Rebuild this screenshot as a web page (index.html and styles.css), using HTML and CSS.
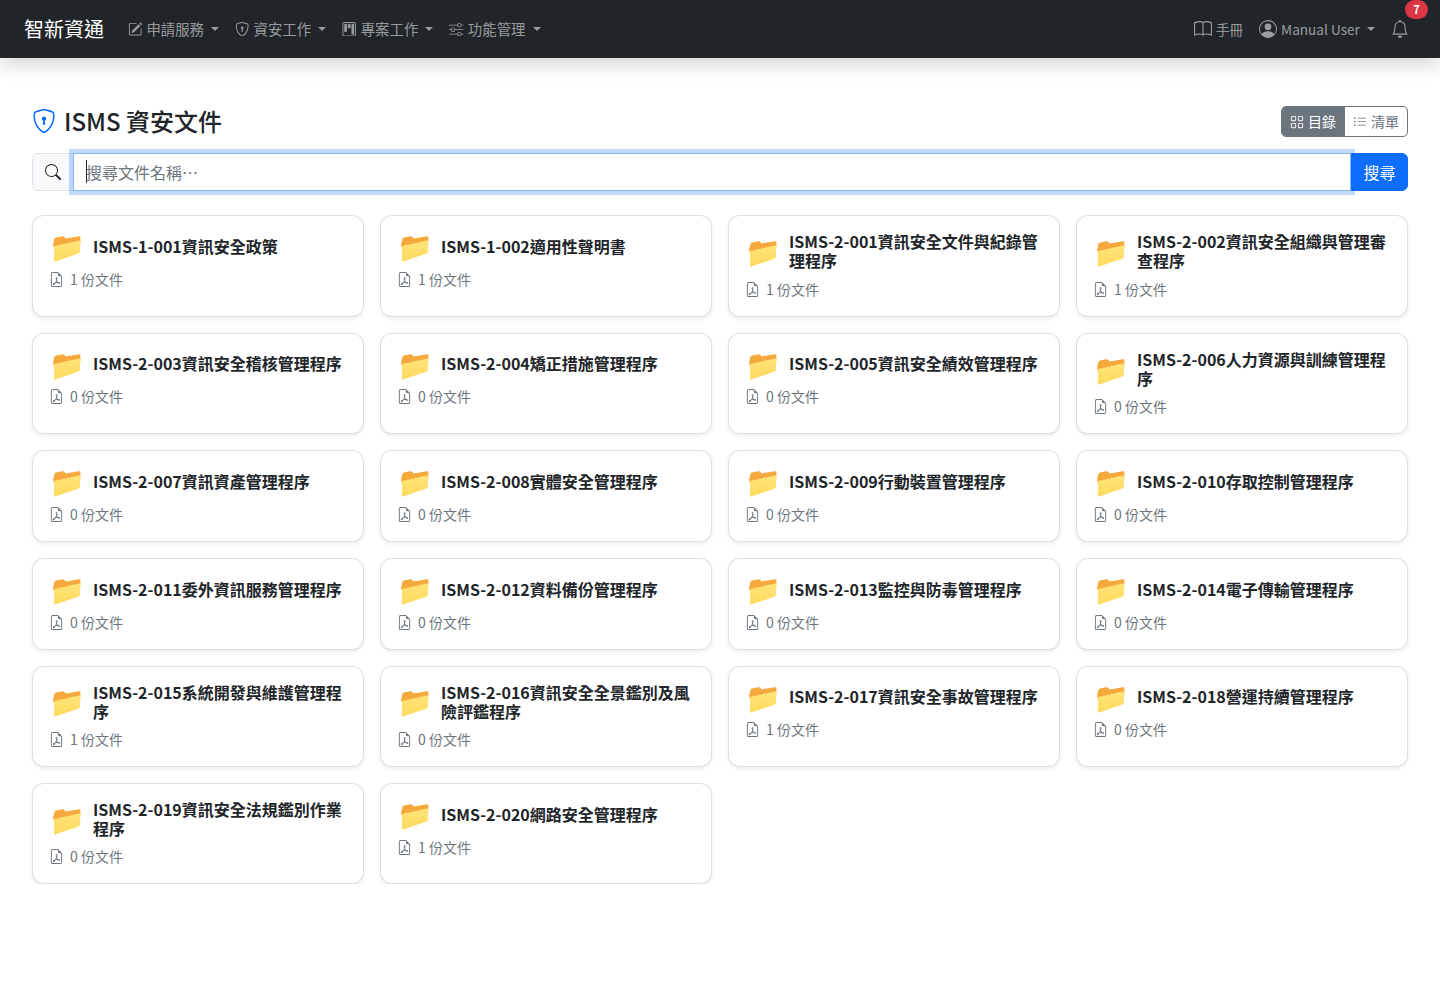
FILE: index.html
```html
<!DOCTYPE html>
<html lang="zh-Hant">
<head>
<meta charset="utf-8">
<title>ISMS 資安文件</title>
<link rel="stylesheet" href="styles.css">
</head>
<body>
<svg class="defs" width="0" height="0" aria-hidden="true">
  <defs>
    <linearGradient id="folder-front" x1="0" y1="0" x2="0" y2="1">
      <stop offset="0" stop-color="#ffe47a"/>
      <stop offset="1" stop-color="#ffd95c"/>
    </linearGradient>
  </defs>
  <symbol id="i-pdf" viewBox="0 0 16 16"><path d="M14 14V4.500L9.500 0H4a2 2 0 0 0-2 2v12a2 2 0 0 0 2 2h8a2 2 0 0 0 2-2M9.500 3A1.500 1.500 0 0 0 11 4.500h2V14a1 1 0 0 1-1 1H4a1 1 0 0 1-1-1V2a1 1 0 0 1 1-1h5.500z"/><path d="M4.603 14.087a.8.8 0 0 1-.438-.42c-.195-.388-.13-.776.08-1.102.198-.307.526-.568.897-.787a7.7 7.7 0 0 1 1.482-.645 20 20 0 0 0 1.062-2.227 7.3 7.3 0 0 1-.43-1.295c-.086-.4-.119-.796-.046-1.136.075-.354.274-.672.65-.823.192-.077.4-.12.602-.077a.7.7 0 0 1 .477.365c.088.164.12.356.127.538.007.188-.012.396-.047.614-.084.51-.27 1.134-.52 1.794a11 11 0 0 0 .98 1.686 5.8 5.8 0 0 1 1.334.05c.364.066.734.195.96.465.12.144.193.32.2.518.007.192-.047.382-.138.563a1.04 1.04 0 0 1-.354.416.86.86 0 0 1-.51.138c-.331-.014-.654-.196-.933-.417a5.7 5.7 0 0 1-.911-.95 11.7 11.7 0 0 0-1.997.406 11.3 11.3 0 0 1-1.02 1.51c-.292.35-.609.656-.927.787a.8.8 0 0 1-.58.029m1.379-1.901q-.25.115-.459.238c-.328.194-.541.383-.647.547-.094.145-.096.25-.04.361q.016.032.026.044l.035-.012c.137-.056.355-.235.635-.572a8 8 0 0 0 .45-.606m1.64-1.33a13 13 0 0 1 1.01-.193 12 12 0 0 1-.51-.858 21 21 0 0 1-.5 1.05zm2.446.45q.226.245.435.41c.24.19.407.253.498.256a.1.1 0 0 0 .07-.015.3.3 0 0 0 .094-.125.44.44 0 0 0 .059-.2.1.1 0 0 0-.026-.063c-.052-.062-.2-.152-.518-.209a4 4 0 0 0-.612-.053zM8.078 7.8a7 7 0 0 0 .2-.828q.046-.282.038-.465a.6.6 0 0 0-.032-.198.5.5 0 0 0-.145.04c-.087.035-.158.106-.196.283-.04.192-.03.469.046.822q.036.167.09.346z"/></symbol>
  <symbol id="i-folder" viewBox="0 0 28 26.500"><path fill="#f5a93c" d="M0 9.500 1.600 3.200Q1.900 2.200 3 2L9.500.8Q10.600.6 11.300 1.400L12.600 3 26 .9Q27.400.7 27.400 2V7L1 13z"/><path fill="url(#folder-front)" d="M1 10.600 26.300 5Q27.600 4.700 27.500 6L26.800 16.700Q26.700 17.800 25.700 18.100L2.200 26.200Q1 26.600 1 25.400z"/></symbol>
</svg>

<nav class="navbar">
  <a class="brand">智新資通</a>
  <ul class="nav-list">
    <li class="nav-link caret"><svg class="ni" viewBox="0 0 16 16"><path d="M15.502 1.94a.5.5 0 0 1 0 .706L14.459 3.69l-2-2L13.502.646a.5.5 0 0 1 .707 0l1.293 1.293zm-1.750 2.456-2-2L4.939 9.210a.5.500 0 0 0-.121.196l-.805 2.414a.25.25 0 0 0 .316.316l2.414-.805a.5.500 0 0 0 .196-.120l6.813-6.814z"/><path fill-rule="evenodd" d="M1 13.500A1.500 1.500 0 0 0 2.500 15h11a1.500 1.500 0 0 0 1.500-1.500v-6a.5.500 0 0 0-1 0v6a.5.500 0 0 1-.5.500h-11a.5.500 0 0 1-.5-.500v-11a.5.500 0 0 1 .5-.500H9a.5.500 0 0 0 0-1H2.500A1.500 1.500 0 0 0 1 2.500z"/></svg>申請服務</li>
    <li class="nav-link caret"><svg class="ni" viewBox="0 0 16 16"><path d="M5.338 1.590a61 61 0 0 0-2.837.856.480.480 0 0 0-.328.390c-.554 4.157.726 7.190 2.253 9.188a10.700 10.700 0 0 0 2.287 2.233c.346.244.652.420.893.533q.180.085.293.118a1 1 0 0 0 .101.025 1 1 0 0 0 .1-.025q.114-.034.294-.118c.240-.113.547-.290.893-.533a10.700 10.700 0 0 0 2.287-2.233c1.527-1.997 2.807-5.031 2.253-9.188a.480.480 0 0 0-.328-.390c-.651-.213-1.750-.560-2.837-.855C9.552 1.290 8.531 1.067 8 1.067c-.530 0-1.552.223-2.662.524zM5.072.560C6.157.265 7.310 0 8 0s1.843.265 2.928.560c1.110.300 2.229.655 2.887.870a1.540 1.540 0 0 1 1.044 1.262c.596 4.477-.787 7.795-2.465 9.990a11.800 11.800 0 0 1-2.517 2.453 7 7 0 0 1-1.048.625c-.280.132-.581.240-.829.240s-.548-.108-.829-.240a7 7 0 0 1-1.048-.625 11.800 11.800 0 0 1-2.517-2.453C1.928 10.487.545 7.169 1.141 2.692A1.540 1.540 0 0 1 2.185 1.430 63 63 0 0 1 5.072.560"/><path d="M9.500 6.500a1.500 1.500 0 0 1-1 1.415l.385 1.990a.500.500 0 0 1-.491.595h-.788a.500.500 0 0 1-.490-.595l.384-1.990a1.500 1.500 0 1 1 2-1.415"/></svg>資安工作</li>
    <li class="nav-link caret"><svg class="ni" viewBox="0 0 16 16"><path d="M13.500 1a1 1 0 0 1 1 1v12a1 1 0 0 1-1 1h-11a1 1 0 0 1-1-1V2a1 1 0 0 1 1-1zm-11-1a2 2 0 0 0-2 2v12a2 2 0 0 0 2 2h11a2 2 0 0 0 2-2V2a2 2 0 0 0-2-2z"/><path d="M6.500 3a1 1 0 0 1 1-1h1a1 1 0 0 1 1 1v3a1 1 0 0 1-1 1h-1a1 1 0 0 1-1-1zm-4 0a1 1 0 0 1 1-1h1a1 1 0 0 1 1 1v7a1 1 0 0 1-1 1h-1a1 1 0 0 1-1-1zm8 0a1 1 0 0 1 1-1h1a1 1 0 0 1 1 1v10a1 1 0 0 1-1 1h-1a1 1 0 0 1-1-1z"/></svg>專案工作</li>
    <li class="nav-link caret"><svg class="ni" viewBox="0 0 16 16"><path fill-rule="evenodd" d="M11.500 2a1.500 1.500 0 1 0 0 3 1.500 1.500 0 0 0 0-3M9.050 3a2.500 2.500 0 0 1 4.900 0H16v1h-2.050a2.500 2.500 0 0 1-4.900 0H0V3zM4.500 7a1.500 1.500 0 1 0 0 3 1.500 1.500 0 0 0 0-3M2.050 8a2.500 2.500 0 0 1 4.900 0H16v1H6.950a2.500 2.500 0 0 1-4.900 0H0V8zm9.450 4a1.500 1.500 0 1 0 0 3 1.500 1.500 0 0 0 0-3m-2.450 1a2.500 2.500 0 0 1 4.900 0H16v1h-2.050a2.500 2.500 0 0 1-4.900 0H0v-1z"/></svg>功能管理</li>
  </ul>
  <ul class="nav-list nav-right">
    <li class="nav-link"><svg class="ni ni-lg" viewBox="0 0 16 16"><path d="M1 2.828c.885-.370 2.154-.769 3.388-.893 1.330-.134 2.458.063 3.112.752v9.746c-.935-.530-2.120-.603-3.213-.493-1.180.120-2.370.461-3.287.811zm7.500-.141c.654-.689 1.782-.886 3.112-.752 1.234.124 2.503.523 3.388.893v9.923c-.918-.350-2.107-.692-3.287-.810-1.094-.111-2.278-.039-3.213.492zM8 1.783C7.015.936 5.587.810 4.287.940c-1.514.153-3.042.672-3.994 1.105A.500.500 0 0 0 0 2.500v11a.500.500 0 0 0 .707.455c.882-.400 2.303-.881 3.680-1.020 1.409-.142 2.590.087 3.223.877a.500.500 0 0 0 .780 0c.633-.790 1.814-1.019 3.222-.877 1.378.139 2.800.620 3.681 1.020A.500.500 0 0 0 16 13.500v-11a.500.500 0 0 0-.293-.455c-.952-.433-2.480-.952-3.994-1.105C10.413.809 8.985.936 8 1.783"/></svg>手冊</li>
    <li class="nav-link caret user"><svg class="ni ni-lg" viewBox="0 0 16 16"><path d="M11 6a3 3 0 1 1-6 0 3 3 0 0 1 6 0"/><path fill-rule="evenodd" d="M0 8a8 8 0 1 1 16 0A8 8 0 0 1 0 8m8-7a7 7 0 0 0-5.468 11.370C3.242 11.226 4.805 10 8 10s4.757 1.225 5.468 2.370A7 7 0 0 0 8 1"/></svg>Manual User</li>
    <li class="nav-link bell"><svg class="ni ni-lg" viewBox="0 0 16 16"><path d="M8 16a2 2 0 0 0 2-2H6a2 2 0 0 0 2 2M8 1.918l-.797.161A4 4 0 0 0 4 6c0 .628-.134 2.197-.459 3.742-.160.767-.376 1.566-.663 2.258h10.244c-.287-.692-.502-1.490-.663-2.258C12.134 8.197 12 6.628 12 6a4 4 0 0 0-3.203-3.920zM14.220 12c.223.447.481.801.780 1H1c.299-.199.557-.553.780-1C2.680 10.200 3 6.880 3 6c0-2.420 1.720-4.440 4.005-4.901a1 1 0 1 1 1.990 0A5 5 0 0 1 13 6c0 .880.320 4.200 1.220 6"/></svg><span class="badge">7</span></li>
  </ul>
</nav>

<main class="page">
  <header class="page-head">
    <h1 class="page-title"><svg class="title-icon" viewBox="0 0 16 16"><path d="M5.338 1.590a61 61 0 0 0-2.837.856.480.480 0 0 0-.328.390c-.554 4.157.726 7.190 2.253 9.188a10.700 10.700 0 0 0 2.287 2.233c.346.244.652.420.893.533q.180.085.293.118a1 1 0 0 0 .101.025 1 1 0 0 0 .1-.025q.114-.034.294-.118c.240-.113.547-.290.893-.533a10.700 10.700 0 0 0 2.287-2.233c1.527-1.997 2.807-5.031 2.253-9.188a.480.480 0 0 0-.328-.390c-.651-.213-1.750-.560-2.837-.855C9.552 1.290 8.531 1.067 8 1.067c-.530 0-1.552.223-2.662.524zM5.072.560C6.157.265 7.310 0 8 0s1.843.265 2.928.560c1.110.300 2.229.655 2.887.870a1.540 1.540 0 0 1 1.044 1.262c.596 4.477-.787 7.795-2.465 9.990a11.800 11.800 0 0 1-2.517 2.453 7 7 0 0 1-1.048.625c-.280.132-.581.240-.829.240s-.548-.108-.829-.240a7 7 0 0 1-1.048-.625 11.800 11.800 0 0 1-2.517-2.453C1.928 10.487.545 7.169 1.141 2.692A1.540 1.540 0 0 1 2.185 1.430 63 63 0 0 1 5.072.560"/><path d="M9.500 6.500a1.500 1.500 0 0 1-1 1.415l.385 1.990a.500.500 0 0 1-.491.595h-.788a.500.500 0 0 1-.490-.595l.384-1.990a1.500 1.500 0 1 1 2-1.415"/></svg>ISMS 資安文件</h1>
    <div class="view-toggle">
      <span class="tog tog-on"><svg class="ti" viewBox="0 0 16 16"><path d="M1 2.500A1.500 1.500 0 0 1 2.500 1h3A1.500 1.500 0 0 1 7 2.500v3A1.500 1.500 0 0 1 5.500 7h-3A1.500 1.500 0 0 1 1 5.500zM2.500 2a.5.500 0 0 0-.5.500v3a.5.500 0 0 0 .5.500h3a.5.500 0 0 0 .5-.500v-3a.5.500 0 0 0-.5-.500zm6.500.500A1.500 1.500 0 0 1 10.500 1h3A1.500 1.500 0 0 1 15 2.500v3A1.500 1.500 0 0 1 13.500 7h-3A1.500 1.500 0 0 1 9 5.500zm1.500-.500a.5.500 0 0 0-.5.500v3a.5.500 0 0 0 .5.500h3a.5.500 0 0 0 .5-.500v-3a.5.500 0 0 0-.5-.500zM1 10.500A1.500 1.500 0 0 1 2.500 9h3A1.500 1.500 0 0 1 7 10.500v3A1.500 1.500 0 0 1 5.500 15h-3A1.500 1.500 0 0 1 1 13.500zm1.500-.500a.5.500 0 0 0-.5.500v3a.5.500 0 0 0 .5.500h3a.5.500 0 0 0 .5-.500v-3a.5.500 0 0 0-.5-.500zm6.500.500A1.500 1.500 0 0 1 10.500 9h3a1.500 1.500 0 0 1 1.500 1.500v3a1.500 1.500 0 0 1-1.500 1.500h-3A1.500 1.500 0 0 1 9 13.500zm1.500-.500a.5.500 0 0 0-.5.500v3a.5.500 0 0 0 .5.500h3a.5.500 0 0 0 .5-.500v-3a.5.500 0 0 0-.5-.500z"/></svg>目錄</span>
      <span class="tog"><svg class="ti" viewBox="0 0 16 16"><path fill-rule="evenodd" d="M5 11.500a.5.500 0 0 1 .5-.500h9a.5.500 0 0 1 0 1h-9a.5.500 0 0 1-.5-.500m0-4a.5.500 0 0 1 .5-.500h9a.5.500 0 0 1 0 1h-9a.5.500 0 0 1-.5-.500m0-4a.5.500 0 0 1 .5-.500h9a.5.500 0 0 1 0 1h-9a.5.500 0 0 1-.5-.500m-3 1a1 1 0 1 0 0-2 1 1 0 0 0 0 2m0 4a1 1 0 1 0 0-2 1 1 0 0 0 0 2m0 4a1 1 0 1 0 0-2 1 1 0 0 0 0 2"/></svg>清單</span>
    </div>
  </header>

  <form class="search">
    <span class="search-addon"><svg class="si" viewBox="0 0 16 16"><path d="M11.742 10.344a6.500 6.500 0 1 0-1.397 1.398h-.001q.044.060.098.115l3.850 3.850a1 1 0 0 0 1.415-1.414l-3.850-3.850a1 1 0 0 0-.115-.100zM12 6.500a5.500 5.500 0 1 1-11 0 5.500 5.500 0 0 1 11 0"/></svg></span>
    <span class="search-field"><input class="search-input" type="text" placeholder="搜尋文件名稱…" autofocus></span>
    <button class="search-btn" type="button">搜尋</button>
  </form>

  <section class="grid">
    <article class="card"><div class="card-head"><svg class="folder"><use href="#i-folder"/></svg><h2 class="card-title">ISMS-1-001資訊安全政策</h2></div><p class="card-meta"><svg class="pdf"><use href="#i-pdf"/></svg>1 份文件</p></article>
    <article class="card"><div class="card-head"><svg class="folder"><use href="#i-folder"/></svg><h2 class="card-title">ISMS-1-002適用性聲明書</h2></div><p class="card-meta"><svg class="pdf"><use href="#i-pdf"/></svg>1 份文件</p></article>
    <article class="card"><div class="card-head"><svg class="folder"><use href="#i-folder"/></svg><h2 class="card-title">ISMS-2-001資訊安全文件與紀錄管理程序</h2></div><p class="card-meta"><svg class="pdf"><use href="#i-pdf"/></svg>1 份文件</p></article>
    <article class="card"><div class="card-head"><svg class="folder"><use href="#i-folder"/></svg><h2 class="card-title">ISMS-2-002資訊安全組織與管理審查程序</h2></div><p class="card-meta"><svg class="pdf"><use href="#i-pdf"/></svg>1 份文件</p></article>
    <article class="card"><div class="card-head"><svg class="folder"><use href="#i-folder"/></svg><h2 class="card-title">ISMS-2-003資訊安全稽核管理程序</h2></div><p class="card-meta"><svg class="pdf"><use href="#i-pdf"/></svg>0 份文件</p></article>
    <article class="card"><div class="card-head"><svg class="folder"><use href="#i-folder"/></svg><h2 class="card-title">ISMS-2-004矯正措施管理程序</h2></div><p class="card-meta"><svg class="pdf"><use href="#i-pdf"/></svg>0 份文件</p></article>
    <article class="card"><div class="card-head"><svg class="folder"><use href="#i-folder"/></svg><h2 class="card-title">ISMS-2-005資訊安全績效管理程序</h2></div><p class="card-meta"><svg class="pdf"><use href="#i-pdf"/></svg>0 份文件</p></article>
    <article class="card"><div class="card-head"><svg class="folder"><use href="#i-folder"/></svg><h2 class="card-title">ISMS-2-006人力資源與訓練管理程序</h2></div><p class="card-meta"><svg class="pdf"><use href="#i-pdf"/></svg>0 份文件</p></article>
    <article class="card"><div class="card-head"><svg class="folder"><use href="#i-folder"/></svg><h2 class="card-title">ISMS-2-007資訊資產管理程序</h2></div><p class="card-meta"><svg class="pdf"><use href="#i-pdf"/></svg>0 份文件</p></article>
    <article class="card"><div class="card-head"><svg class="folder"><use href="#i-folder"/></svg><h2 class="card-title">ISMS-2-008實體安全管理程序</h2></div><p class="card-meta"><svg class="pdf"><use href="#i-pdf"/></svg>0 份文件</p></article>
    <article class="card"><div class="card-head"><svg class="folder"><use href="#i-folder"/></svg><h2 class="card-title">ISMS-2-009行動裝置管理程序</h2></div><p class="card-meta"><svg class="pdf"><use href="#i-pdf"/></svg>0 份文件</p></article>
    <article class="card"><div class="card-head"><svg class="folder"><use href="#i-folder"/></svg><h2 class="card-title">ISMS-2-010存取控制管理程序</h2></div><p class="card-meta"><svg class="pdf"><use href="#i-pdf"/></svg>0 份文件</p></article>
    <article class="card"><div class="card-head"><svg class="folder"><use href="#i-folder"/></svg><h2 class="card-title">ISMS-2-011委外資訊服務管理程序</h2></div><p class="card-meta"><svg class="pdf"><use href="#i-pdf"/></svg>0 份文件</p></article>
    <article class="card"><div class="card-head"><svg class="folder"><use href="#i-folder"/></svg><h2 class="card-title">ISMS-2-012資料備份管理程序</h2></div><p class="card-meta"><svg class="pdf"><use href="#i-pdf"/></svg>0 份文件</p></article>
    <article class="card"><div class="card-head"><svg class="folder"><use href="#i-folder"/></svg><h2 class="card-title">ISMS-2-013監控與防毒管理程序</h2></div><p class="card-meta"><svg class="pdf"><use href="#i-pdf"/></svg>0 份文件</p></article>
    <article class="card"><div class="card-head"><svg class="folder"><use href="#i-folder"/></svg><h2 class="card-title">ISMS-2-014電子傳輸管理程序</h2></div><p class="card-meta"><svg class="pdf"><use href="#i-pdf"/></svg>0 份文件</p></article>
    <article class="card"><div class="card-head"><svg class="folder"><use href="#i-folder"/></svg><h2 class="card-title">ISMS-2-015系統開發與維護管理程序</h2></div><p class="card-meta"><svg class="pdf"><use href="#i-pdf"/></svg>1 份文件</p></article>
    <article class="card"><div class="card-head"><svg class="folder"><use href="#i-folder"/></svg><h2 class="card-title">ISMS-2-016資訊安全全景鑑別及風險評鑑程序</h2></div><p class="card-meta"><svg class="pdf"><use href="#i-pdf"/></svg>0 份文件</p></article>
    <article class="card"><div class="card-head"><svg class="folder"><use href="#i-folder"/></svg><h2 class="card-title">ISMS-2-017資訊安全事故管理程序</h2></div><p class="card-meta"><svg class="pdf"><use href="#i-pdf"/></svg>1 份文件</p></article>
    <article class="card"><div class="card-head"><svg class="folder"><use href="#i-folder"/></svg><h2 class="card-title">ISMS-2-018營運持續管理程序</h2></div><p class="card-meta"><svg class="pdf"><use href="#i-pdf"/></svg>0 份文件</p></article>
    <article class="card"><div class="card-head"><svg class="folder"><use href="#i-folder"/></svg><h2 class="card-title">ISMS-2-019資訊安全法規鑑別作業程序</h2></div><p class="card-meta"><svg class="pdf"><use href="#i-pdf"/></svg>0 份文件</p></article>
    <article class="card"><div class="card-head"><svg class="folder"><use href="#i-folder"/></svg><h2 class="card-title">ISMS-2-020網路安全管理程序</h2></div><p class="card-meta"><svg class="pdf"><use href="#i-pdf"/></svg>1 份文件</p></article>
  </section>
</main>
</body>
</html>
```
FILE: styles.css
```css
* { box-sizing: border-box; }
html, body { margin: 0; padding: 0; }
body {
  background: #fff;
  color: #212529;
  font-family: "Noto Sans CJK TC", "Noto Sans", sans-serif;
  font-size: 16px;
  line-height: 1.5;
}
.defs { position: absolute; }

.navbar {
  display: flex;
  align-items: center;
  height: 58px;
  padding: 0 24px;
  background: #212529;
  box-shadow: 0 8px 16px rgba(0, 0, 0, .15);
  position: relative;
}
.brand { color: #fff; font-size: 20px; margin-right: 16px; white-space: nowrap; }
.nav-list { display: flex; align-items: center; list-style: none; margin: 0; padding: 0; }
.nav-right { margin-left: auto; margin-right: -1px; }
.nav-right .nav-link { font-size: 13.6px; }
.nav-link {
  display: flex;
  align-items: center;
  position: relative;
  padding: 8px 8px;
  font-size: 14.4px;
  color: rgba(255, 255, 255, .55);
  white-space: nowrap;
}
.caret::after {
  content: "";
  margin-left: 7.2px;
  border-top: 4.3px solid;
  border-left: 4.3px solid transparent;
  border-right: 4.3px solid transparent;
}
.ni { width: 14.4px; height: 14.4px; fill: currentColor; margin-right: 4px; flex: none; }
.ni-lg { width: 18px; height: 18px; }
.bell .ni-lg { margin-right: 0; }
.badge {
  position: absolute;
  top: -12px;
  left: 22px;
  min-width: 23px;
  height: 19px;
  padding: 0 7px;
  border-radius: 10px;
  background: #dc3545;
  color: #fff;
  font-size: 11px;
  font-weight: 700;
  line-height: 19px;
  text-align: center;
}

.page { padding: 48px 32px 0; }
.page-head { display: flex; justify-content: space-between; align-items: center; margin-bottom: 16.2px; }
.page-title { display: flex; align-items: center; margin: 0; font-size: 24px; font-weight: 500; line-height: 1.2; }
.title-icon { width: 24px; height: 24px; fill: #0d6efd; margin-right: 8px; }
.view-toggle { display: flex; height: 31px; border: 1px solid #6c757d; border-radius: 5px; overflow: hidden; }
.tog { display: flex; align-items: center; padding: 0 8px; font-size: 14px; color: #6c757d; }
.tog-on { background: #6c757d; color: #fff; padding-right: 9px; }
.ti { width: 14px; height: 14px; fill: currentColor; margin-right: 4px; }

.search { display: flex; height: 38px; margin-bottom: 24px; }
.search-addon {
  display: flex;
  align-items: center;
  justify-content: center;
  width: 42px;
  background: #f8f9fa;
  border: 1px solid #dee2e6;
  border-radius: 6px 0 0 6px;
}
.si { width: 16px; height: 16px; fill: #212529; }
.search-field { flex: 1; min-width: 0; display: flex; margin-left: -1px; position: relative; }
.search-field::after {
  content: "";
  position: absolute;
  left: 13px;
  top: 7px;
  width: 1px;
  height: 23px;
  background: #212529;
}
.search-input {
  flex: 1;
  min-width: 0;
  padding: 6px 12px;
  border: 1px solid #86b7fe;
  border-radius: 0;
  outline: 0;
  box-shadow: 0 0 0 4px rgba(13, 110, 253, .25);
  font: inherit;
  color: #212529;
  caret-color: transparent;
}
.search-input::placeholder { color: #6c757d; opacity: 1; }
.search-btn {
  width: 57px;
  border: 1px solid #0d6efd;
  border-radius: 0 6px 6px 0;
  background: #0d6efd;
  color: #fff;
  font: inherit;
  padding: 0;
}

.grid { display: grid; grid-template-columns: repeat(4, 1fr); gap: 16px; }
.card {
  padding: 16px;
  border: 1px solid rgba(0, 0, 0, .125);
  border-radius: 12px;
  background: #fff;
  box-shadow: 0 2px 4px rgba(0, 0, 0, .075);
}
.card-head { display: flex; align-items: center; min-height: 28.8px; }
.folder { width: 28px; height: 26.5px; flex: none; margin: 0 12px 0 4px; transform: translateY(2.4px); overflow: visible; }
.card-title { margin: 0; font-size: 16px; font-weight: 700; line-height: 1.2; }
.card-meta { display: flex; align-items: center; margin: 8px 0 0; font-size: 14px; color: #6c757d; }
.pdf { width: 15px; height: 15px; fill: currentColor; margin-right: 6px; flex: none; }
```
